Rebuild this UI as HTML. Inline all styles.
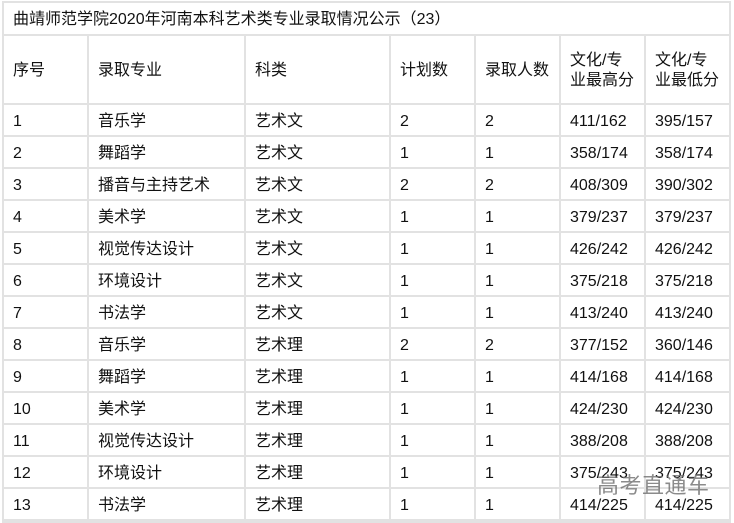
<!DOCTYPE html>
<html><head><meta charset="utf-8"><style>
html,body{margin:0;padding:0;background:#fff;width:734px;height:523px;overflow:hidden;position:relative}
table{position:absolute;left:2px;top:1px;border-collapse:collapse;font-family:"Liberation Sans","Noto Sans CJK SC",sans-serif;font-size:16px;color:#111;table-layout:fixed}
td{border:2px solid #e2e2e2;padding:3px 0 0 9px;height:27px;white-space:nowrap;line-height:20px}
tr.t td{height:28px}
tr.h td{height:64px}
tr.e td{height:0;padding:0;line-height:0}
.wm{position:absolute;left:597px;top:468px;font-family:"Noto Sans CJK SC",sans-serif;font-size:22px;color:rgba(110,110,110,0.8);letter-spacing:0.5px}
</style></head><body>
<table>
<colgroup><col style="width:85px"><col style="width:157px"><col style="width:145px"><col style="width:85px"><col style="width:85px"><col style="width:85px"><col style="width:85px"></colgroup>
<tr class="t"><td colspan="7">曲靖师范学院2020年河南本科艺术类专业录取情况公示（23）</td></tr>
<tr class="h"><td>序号</td><td>录取专业</td><td>科类</td><td>计划数</td><td>录取人数</td><td>文化/专<br>业最高分</td><td>文化/专<br>业最低分</td></tr>
<tr><td>1</td><td>音乐学</td><td>艺术文</td><td>2</td><td>2</td><td>411/162</td><td>395/157</td></tr>
<tr><td>2</td><td>舞蹈学</td><td>艺术文</td><td>1</td><td>1</td><td>358/174</td><td>358/174</td></tr>
<tr><td>3</td><td>播音与主持艺术</td><td>艺术文</td><td>2</td><td>2</td><td>408/309</td><td>390/302</td></tr>
<tr><td>4</td><td>美术学</td><td>艺术文</td><td>1</td><td>1</td><td>379/237</td><td>379/237</td></tr>
<tr><td>5</td><td>视觉传达设计</td><td>艺术文</td><td>1</td><td>1</td><td>426/242</td><td>426/242</td></tr>
<tr><td>6</td><td>环境设计</td><td>艺术文</td><td>1</td><td>1</td><td>375/218</td><td>375/218</td></tr>
<tr><td>7</td><td>书法学</td><td>艺术文</td><td>1</td><td>1</td><td>413/240</td><td>413/240</td></tr>
<tr><td>8</td><td>音乐学</td><td>艺术理</td><td>2</td><td>2</td><td>377/152</td><td>360/146</td></tr>
<tr><td>9</td><td>舞蹈学</td><td>艺术理</td><td>1</td><td>1</td><td>414/168</td><td>414/168</td></tr>
<tr><td>10</td><td>美术学</td><td>艺术理</td><td>1</td><td>1</td><td>424/230</td><td>424/230</td></tr>
<tr><td>11</td><td>视觉传达设计</td><td>艺术理</td><td>1</td><td>1</td><td>388/208</td><td>388/208</td></tr>
<tr><td>12</td><td>环境设计</td><td>艺术理</td><td>1</td><td>1</td><td>375/243</td><td>375/243</td></tr>
<tr><td>13</td><td>书法学</td><td>艺术理</td><td>1</td><td>1</td><td>414/225</td><td>414/225</td></tr>
<tr class="e"><td></td><td></td><td></td><td></td><td></td><td></td><td></td></tr>
</table>
<div class="wm">高考直通车</div>
</body></html>
